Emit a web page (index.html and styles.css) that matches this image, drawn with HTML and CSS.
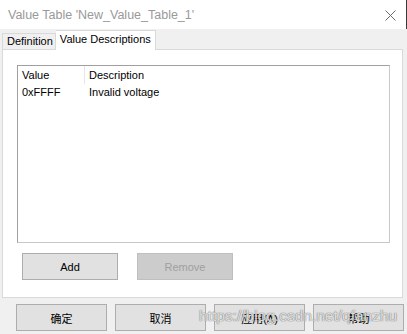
FILE: index.html
```html
<!DOCTYPE html>
<html>
<head>
  <meta charset="utf-8">
  <title>Value Table</title>
  <link rel="stylesheet" href="styles.css">
</head>
<body>
  <div class="ventana">
    <!-- Barra de título -->
    <div class="titulo">
      <span class="titulo-texto">Value Table 'New_Value_Table_1'</span>
      <svg class="cerrar" width="11" height="11" viewBox="0 0 11 11">
        <path d="M0.5 0.5 L10.5 10.5 M10.5 0.5 L0.5 10.5" stroke="#6b6b6b" stroke-width="1" fill="none"/>
      </svg>
    </div>

    <!-- Pestañas -->
    <div class="pestanas">
      <div class="pestana">Definition</div>
      <div class="pestana activa">Value Descriptions</div>
    </div>

    <div class="panel">
      <div class="lista">
        <div class="fila cabecera">
          <span class="col-valor">Value</span>
          <span class="col-desc">Description</span>
        </div>
        <div class="fila">
          <span class="col-valor">0xFFFF</span>
          <span class="col-desc">Invalid voltage</span>
        </div>
      </div>
      <div class="acciones">
        <button class="boton ancho">Add</button>
        <button class="boton ancho" disabled>Remove</button>
      </div>
    </div>

    <div class="pie">
      <button class="boton">确定</button>
      <button class="boton">取消</button>
      <button class="boton">应用(A)</button>
      <button class="boton">帮助</button>
    </div>

    <div class="marca">https://blog.csdn.net/qfanzhu</div>
  </div>
</body>
</html>
```

FILE: styles.css
```css
* {
  box-sizing: border-box;
}

body {
  margin: 0;
  padding: 0;
  font-family: "Liberation Sans", Arial, "Noto Sans CJK SC", sans-serif;
  font-size: 11px;
  color: #000;
  background: #f0f0f0;
}

.ventana {
  position: relative;
  width: 407px;
  height: 334px;
  overflow: hidden;
}

.titulo {
  height: 29px;
  background: #fff;
  display: flex;
  align-items: center;
  justify-content: space-between;
  padding: 0 10px 0 8px;
  border-right: 1px solid #3a3a3a;
}

.titulo-texto {
  font-size: 12.5px;
  color: #999;
  margin-top: 1px;
}

.cerrar {
  margin-top: 1px;
}

.pestanas {
  display: flex;
  align-items: flex-end;
  height: 20px;
  padding-left: 2px;
}

.pestana {
  height: 16px;
  padding: 0 2px 0 4px;
  line-height: 14px;
  border: 1px solid #d9d9d9;
  border-bottom: none;
  color: #000;
}

.pestana.activa {
  height: 20px;
  line-height: 17px;
  padding: 0 4px;
  background: #fff;
  border-left: none;
  position: relative;
  top: 1px;
}

.panel {
  margin-left: 2px;
  width: 401px;
  height: 249px;
  background: #fff;
  border: 1px solid #d9d9d9;
  padding: 15px 12px 0 14px;
}

.lista {
  height: 178px;
  border: 1px solid #a0a0a0;
  border-right-color: #c8c8c8;
  border-bottom-color: #c8c8c8;
}

.fila {
  display: flex;
  height: 17px;
  line-height: 17px;
}

.cabecera {
  height: 18px;
  line-height: 18px;
}

.col-valor {
  width: 67px;
  padding-left: 4px;
}

.cabecera .col-valor {
  border-right: 1px solid #e5e5e5;
}

.col-desc {
  padding-left: 4px;
}

.acciones {
  display: flex;
  gap: 19px;
  padding-left: 5px;
  margin-top: 10px;
}

.boton {
  width: 91px;
  height: 27px;
  background: #e1e1e1;
  border: 1px solid #adadad;
  font-family: "Liberation Sans", Arial, "Noto Sans CJK SC", sans-serif;
  font-size: 11px;
  color: #000;
  padding: 0;
}

.boton.ancho {
  width: 96px;
}

.boton:disabled {
  background: #cccccc;
  border-color: #bfbfbf;
  color: #a0a0a0;
}

.pie {
  display: flex;
  gap: 8px;
  padding-left: 16px;
  margin-top: 6px;
}

.marca {
  position: absolute;
  left: 199px;
  top: 307px;
  font-size: 15.5px;
  color: rgba(255, 255, 255, 0.8);
  text-shadow: 0 0 1px rgba(60, 60, 60, 0.7), 0 0 1px rgba(60, 60, 60, 0.5);
  pointer-events: none;
}
```
